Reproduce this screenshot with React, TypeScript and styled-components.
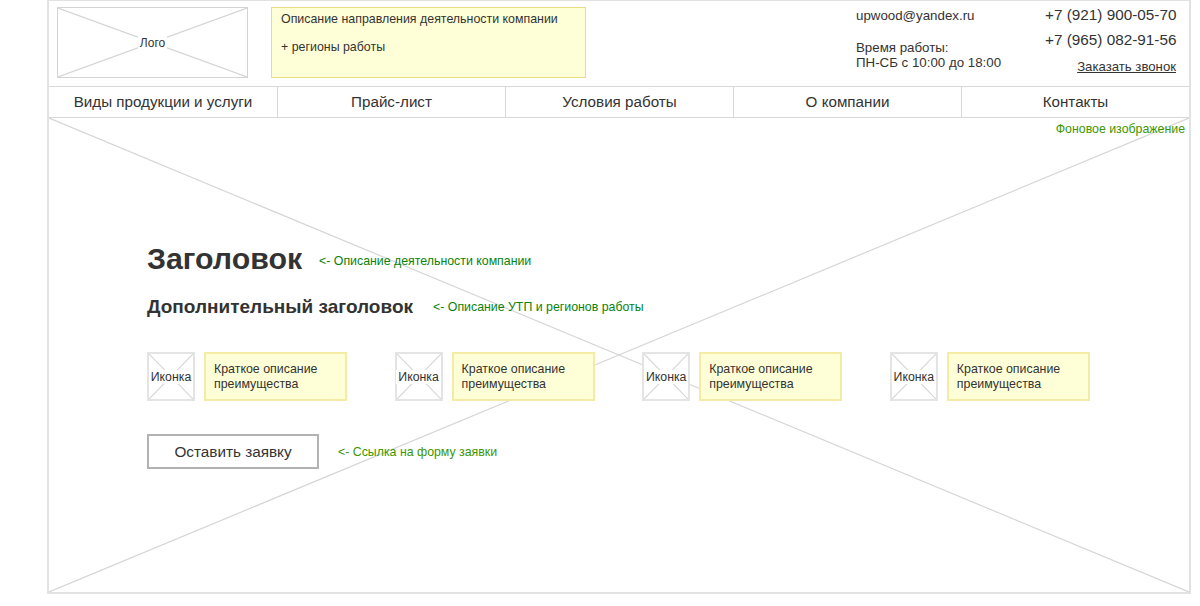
import React from 'react';
import styled, { createGlobalStyle } from 'styled-components';

const GlobalStyle = createGlobalStyle`
  html, body {
    margin: 0;
    padding: 0;
    background: #fff;
    font-family: "Liberation Sans", Arial, sans-serif;
    color: #333;
  }
`;

const Page = styled.div`
  width: 1144px;
  height: 594px;
  margin-left: 47px;
  box-sizing: border-box;
  border: solid #e2e2e2;
  border-width: 1px 2px 2px 2px;
  display: flex;
  flex-direction: column;
`;

const Header = styled.header`
  height: 85px;
  flex: none;
  display: flex;
  padding: 6px 0 0 8px;
  box-sizing: border-box;
`;

const Cross = styled.svg`
  position: absolute;
  inset: 0;
  width: 100%;
  height: 100%;
  line {
    stroke: #d6d6d6;
    stroke-width: 1.2;
    vector-effect: non-scaling-stroke;
  }
`;

const CrossLines = () => (
  <Cross viewBox="0 0 100 100" preserveAspectRatio="none">
    <line x1="0" y1="0" x2="100" y2="100" />
    <line x1="0" y1="100" x2="100" y2="0" />
  </Cross>
);

const Logo = styled.div`
  position: relative;
  width: 191px;
  height: 71px;
  box-sizing: border-box;
  border: 1px solid #d4d4d4;
  display: flex;
  align-items: center;
  justify-content: center;
  font-size: 12px;
`;

const PlaceholderLabel = styled.span`
  position: relative;
  background: #fff;
  padding: 0 2px;
`;

const Note = styled.div`
  width: 315px;
  height: 71px;
  margin-left: 23px;
  box-sizing: border-box;
  padding: 4px 9px;
  background: #ffffd7;
  border: 1px solid #e8dc84;
  font-size: 12.4px;
  line-height: 15px;
  p {
    margin: 0 0 13px;
  }
`;

const ContactColumn = styled.div`
  margin-left: 270px;
  padding-top: 1px;
  width: 189px;
  font-size: 13.3px;
  line-height: 15px;
  p {
    margin: 0 0 17px;
  }
`;

const PhoneColumn = styled.div`
  flex: none;
  width: 131px;
  text-align: right;
  font-size: 15.3px;
  line-height: 16px;
  div {
    margin-bottom: 9px;
    white-space: nowrap;
  }
  a {
    display: block;
    margin-top: 11px;
    font-size: 13.2px;
    color: #333;
    text-decoration: underline;
  }
`;

const Nav = styled.nav`
  height: 32px;
  flex: none;
  box-sizing: border-box;
  display: grid;
  grid-template-columns: repeat(5, 1fr);
  border: solid #d8d8d8;
  border-width: 1px 0;
`;

const NavItem = styled.a`
  display: flex;
  align-items: center;
  justify-content: center;
  padding-bottom: 2px;
  font-size: 15.2px;
  color: #333;
  border-left: 1px solid #d8d8d8;
  &:first-child {
    border-left: none;
  }
`;

const Hero = styled.section`
  position: relative;
  flex: 1;
  padding: 121px 0 0 98px;
`;

const HeroContent = styled.div`
  position: relative;
`;

const Hint = styled.span<{ $tone?: string }>`
  font-size: 12.35px;
  color: ${props => props.$tone || '#0a820a'};
`;

const BackgroundHint = styled(Hint)`
  position: absolute;
  top: 4px;
  right: 4px;
`;

const TitleHint = styled(Hint)`
  margin-top: 4px;
`;

const TitleRow = styled.div`
  display: flex;
  align-items: center;
  height: 40px;
  gap: 17px;
`;

const Title = styled.h1`
  margin: 0;
  font-size: 30.3px;
  font-weight: bold;
  line-height: 40px;
`;

const SubtitleRow = styled.div`
  display: flex;
  align-items: center;
  height: 24px;
  margin-top: 16px;
  gap: 20px;
`;

const Subtitle = styled.h2`
  margin: 0;
  font-size: 19px;
  font-weight: bold;
  line-height: 24px;
`;

const Features = styled.div`
  display: flex;
  margin-top: 33px;
`;

const Feature = styled.div`
  width: 247.6px;
  flex: none;
  display: flex;
  gap: 9px;
`;

const IconBox = styled.div`
  position: relative;
  width: 48px;
  height: 49px;
  box-sizing: border-box;
  border: 2px solid #e4e4e4;
  background: #fff;
  display: flex;
  align-items: center;
  justify-content: center;
  font-size: 12.3px;
`;

const FeatureText = styled.div`
  width: 143px;
  height: 49px;
  box-sizing: border-box;
  padding: 8px 8px;
  background: #ffffd7;
  border: 2px solid #f4eca4;
  font-size: 12.4px;
  line-height: 15px;
`;

const ActionRow = styled.div`
  display: flex;
  align-items: center;
  margin-top: 33px;
  gap: 19px;
`;

const ApplyButton = styled.a`
  width: 172px;
  height: 35px;
  box-sizing: border-box;
  border: 2px solid #b2b2b2;
  background: #fff;
  display: flex;
  align-items: center;
  justify-content: center;
  font-size: 15.3px;
  color: #333;
`;

const navItems = ['Виды продукции и услуги', 'Прайс-лист', 'Условия работы', 'О компании', 'Контакты'];

export default function App() {
  return (
    <>
      <GlobalStyle />
      <Page>
        <Header>
          <Logo>
            <CrossLines />
            <PlaceholderLabel>Лого</PlaceholderLabel>
          </Logo>
          <Note>
            <p>Описание направления деятельности компании</p>
            <p>+ регионы работы</p>
          </Note>
          <ContactColumn>
            <p>upwood@yandex.ru</p>
            Время работы:
            <br />
            ПН-СБ с 10:00 до 18:00
          </ContactColumn>
          <PhoneColumn>
            <div>+7 (921) 900-05-70</div>
            <div>+7 (965) 082-91-56</div>
            <a href="#call">Заказать звонок</a>
          </PhoneColumn>
        </Header>
        <Nav>
          {navItems.map(item => (
            <NavItem key={item}>{item}</NavItem>
          ))}
        </Nav>
        <Hero>
          <CrossLines />
          <BackgroundHint $tone="#3c9600">Фоновое изображение</BackgroundHint>
          <HeroContent>
            <TitleRow>
              <Title>Заголовок</Title>
              <TitleHint>&lt;- Описание деятельности компании</TitleHint>
            </TitleRow>
            <SubtitleRow>
              <Subtitle>Дополнительный заголовок</Subtitle>
              <Hint>&lt;- Описание УТП и регионов работы</Hint>
            </SubtitleRow>
            <Features>
              {[0, 1, 2, 3].map(i => (
                <Feature key={i}>
                  <IconBox>
                    <CrossLines />
                    <PlaceholderLabel>Иконка</PlaceholderLabel>
                  </IconBox>
                  <FeatureText>
                    Краткое описание
                    <br />
                    преимущества
                  </FeatureText>
                </Feature>
              ))}
            </Features>
            <ActionRow>
              <ApplyButton>Оставить заявку</ApplyButton>
              <Hint $tone="#3c9600">&lt;- Ссылка на форму заявки</Hint>
            </ActionRow>
          </HeroContent>
        </Hero>
      </Page>
    </>
  );
}
